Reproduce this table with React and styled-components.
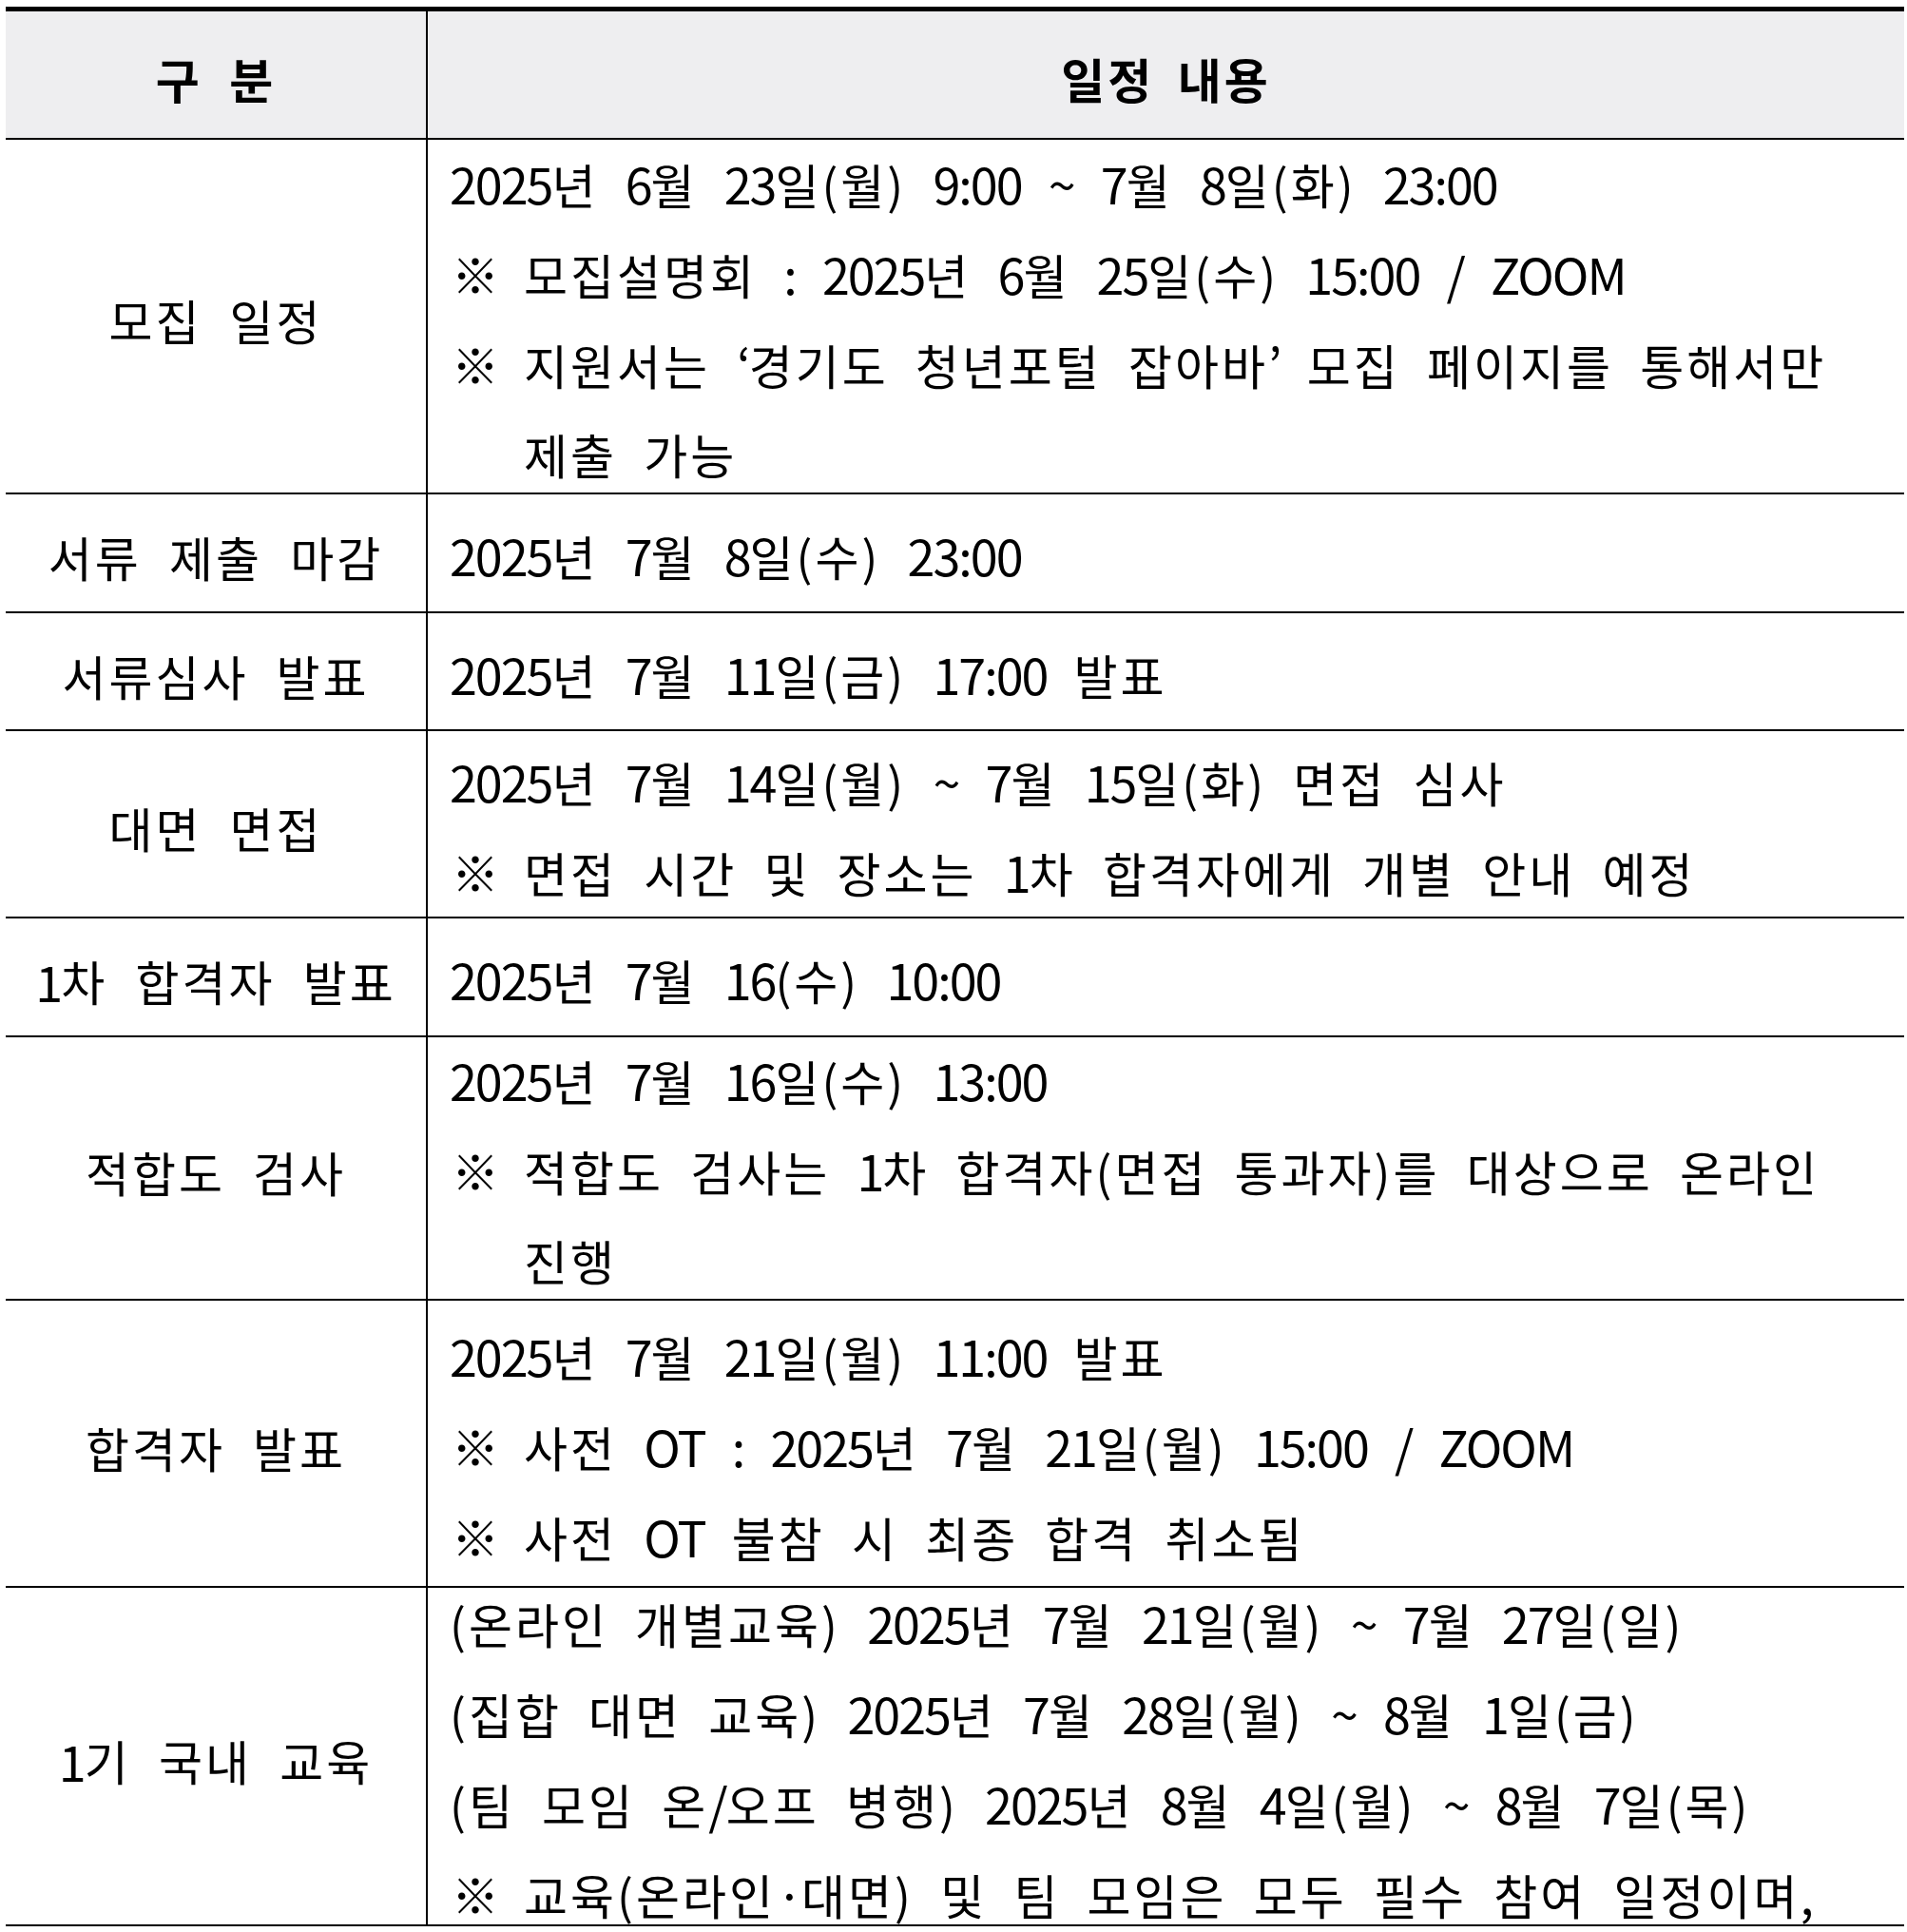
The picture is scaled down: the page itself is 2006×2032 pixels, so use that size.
import React from 'react';
import styled, { createGlobalStyle } from 'styled-components';

const GlobalStyle = createGlobalStyle`
  html, body { margin: 0; padding: 0; background: #ffffff; }
  body {
    font-family: "Noto Sans CJK KR", "Noto Sans", sans-serif;
    color: #000;
  }
`;

const Page = styled.div`
  width: 2006px;
  height: 2032px;
  overflow: hidden;
  box-sizing: border-box;
  padding: 7px 3px 0 6px;
`;

const Table = styled.div`
  width: 1997px;
  border-top: 5px solid #000;
  display: flex;
  flex-direction: column;
`;

const Row = styled.div`
  display: flex;
  box-sizing: border-box;
  height: ${(p) => p.$h}px;
  border-bottom: 2px solid #000;
  background: ${(p) => (p.$head ? '#eeeef0' : '#fff')};
`;

const LabelCell = styled.div`
  flex: 0 0 444px;
  box-sizing: border-box;
  border-right: 2px solid #000;
  display: flex;
  align-items: center;
  justify-content: center;
  padding-top: 8px;
  font-size: 50px;
  line-height: 95px;
  font-weight: ${(p) => (p.$head ? 700 : 400)};
  letter-spacing: 3px;
  word-spacing: ${(p) => (p.$head ? 14 : 15)}px;
  white-space: nowrap;
`;

const ContentCell = styled.div`
  flex: 1 1 auto;
  box-sizing: border-box;
  display: flex;
  flex-direction: column;
  justify-content: center;
  align-items: ${(p) => (p.$head ? 'center' : 'stretch')};
  padding-top: ${(p) => (p.$head ? 8 : 4)}px;
  padding-left: ${(p) => (p.$head ? 0 : 23)}px;
  font-size: 50px;
  line-height: 95px;
  font-weight: ${(p) => (p.$head ? 700 : 400)};
  letter-spacing: 3px;
  word-spacing: ${(p) => (p.$head ? 10 : 14)}px;
  white-space: nowrap;
`;

const Line = styled.div`
  height: 95px;
`;

const Note = styled.div`
  display: flex;
`;

const Mark = styled.span`
  flex: 0 0 78px;
  padding-left: 2px;
  box-sizing: border-box;
`;

const NoteBody = styled.div`
  display: flex;
  flex-direction: column;
`;

const Num = styled.span`
  font-size: 52px;
  letter-spacing: -2px;
`;

const renderText = (str) =>
  str.split(/([0-9A-Za-z:~\/‘’·,]+)/).map((part, i) =>
    i % 2 === 1 ? <Num key={i}>{part}</Num> : <React.Fragment key={i}>{part}</React.Fragment>
  );

const rows = [
  {
    label: '모집 일정',
    h: 373,
    lines: [
      { t: '2025년 6월 23일(월) 9:00 ~ 7월 8일(화) 23:00' },
      { note: ['모집설명회 : 2025년 6월 25일(수) 15:00 / ZOOM'] },
      { note: ['지원서는 ‘경기도 청년포털 잡아바’ 모집 페이지를 통해서만', '제출 가능'] },
    ],
  },
  { label: '서류 제출 마감', h: 125, lines: [{ t: '2025년 7월 8일(수) 23:00' }] },
  { label: '서류심사 발표', h: 124, lines: [{ t: '2025년 7월 11일(금) 17:00 발표' }] },
  {
    label: '대면 면접',
    h: 197,
    lines: [
      { t: '2025년 7월 14일(월) ~ 7월 15일(화) 면접 심사' },
      { note: ['면접 시간 및 장소는 1차 합격자에게 개별 안내 예정'] },
    ],
  },
  { label: '1차 합격자 발표', h: 125, lines: [{ t: '2025년 7월 16(수) 10:00' }] },
  {
    label: '적합도 검사',
    h: 277,
    lines: [
      { t: '2025년 7월 16일(수) 13:00' },
      { note: ['적합도 검사는 1차 합격자(면접 통과자)를 대상으로 온라인', '진행'] },
    ],
  },
  {
    label: '합격자 발표',
    h: 302,
    lines: [
      { t: '2025년 7월 21일(월) 11:00 발표' },
      { note: ['사전 OT : 2025년 7월 21일(월) 15:00 / ZOOM'] },
      { note: ['사전 OT 불참 시 최종 합격 취소됨'] },
    ],
  },
  {
    label: '1기 국내 교육',
    h: 356,
    lines: [
      { t: '(온라인 개별교육) 2025년 7월 21일(월) ~ 7월 27일(일)' },
      { t: '(집합 대면 교육) 2025년 7월 28일(월) ~ 8월 1일(금)' },
      { t: '(팀 모임 온/오프 병행) 2025년 8월 4일(월) ~ 8월 7일(목)' },
      { note: ['교육(온라인·대면) 및 팀 모임은 모두 필수 참여 일정이며,'] },
    ],
  },
];

export default function App() {
  return (
    <>
      <GlobalStyle />
      <Page>
        <Table>
          <Row $h={135} $head>
            <LabelCell $head>구 분</LabelCell>
            <ContentCell $head>일정 내용</ContentCell>
          </Row>
          {rows.map((r) => (
            <Row key={r.label} $h={r.h}>
              <LabelCell>{renderText(r.label)}</LabelCell>
              <ContentCell>
                {r.lines.map((l, i) =>
                  l.note ? (
                    <Note key={i}>
                      <Mark>※</Mark>
                      <NoteBody>
                        {l.note.map((n, j) => (
                          <Line key={j}>{renderText(n)}</Line>
                        ))}
                      </NoteBody>
                    </Note>
                  ) : (
                    <Line key={i}>{renderText(l.t)}</Line>
                  )
                )}
              </ContentCell>
            </Row>
          ))}
        </Table>
      </Page>
    </>
  );
}
